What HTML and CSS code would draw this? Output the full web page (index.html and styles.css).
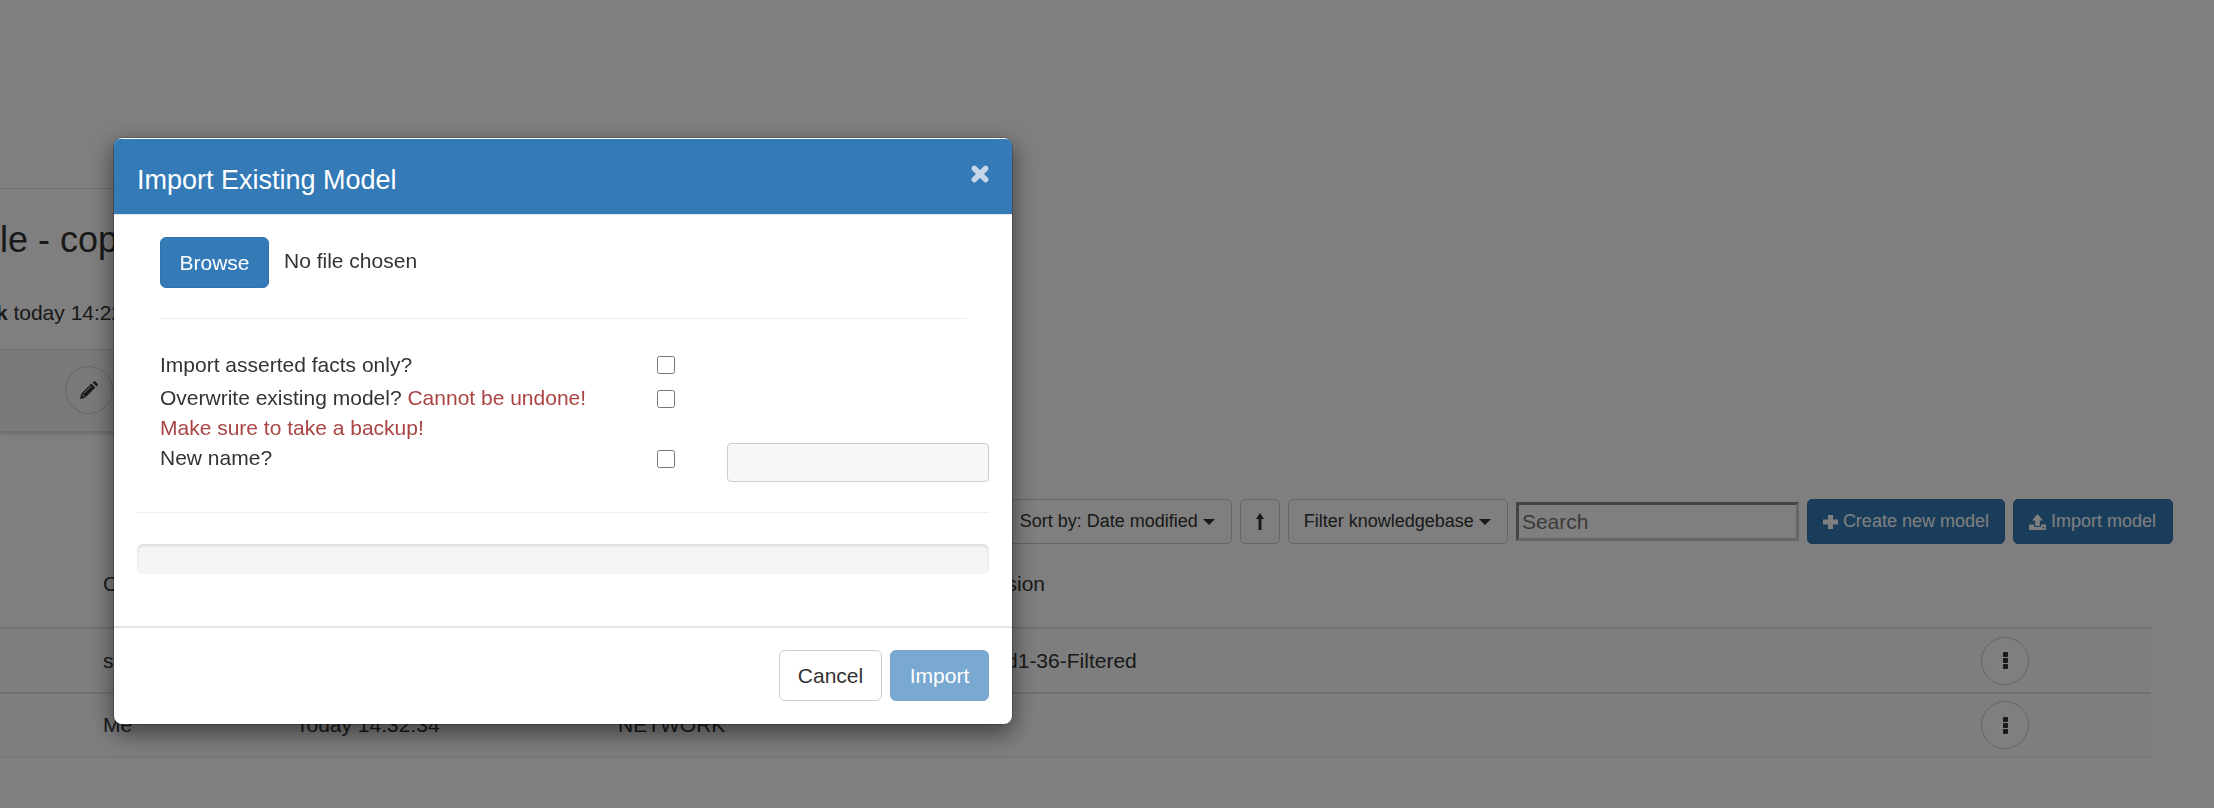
FILE: index.html
```html
<!DOCTYPE html>
<html>
<head>
    <title>Models</title>
    <link rel="stylesheet" href="styles.css">
</head>
<body>
    <div class="page">
        <section class="model-panel">
            <div class="panel-info">
                <h3 class="model-title">Example - copy</h3>
                <p class="model-meta">Edited by <b>Frank</b> today 14:22:10</p>
            </div>
            <div class="panel-actions">
                <span class="circle-btn">
                    <svg class="icon-pencil" viewBox="0 0 18 18"><path d="M0 18l1.2-5.2L11.4 2.6l4 4L5.2 16.8z M12.6 1.4l.7-.7c.7-.7 1.5-.7 2.2 0l1.8 1.8c.7.7.7 1.5 0 2.2l-.7.7z" fill="#333"/><path d="M2.2 13.4l2.4 2.4M3.8 12.4l7.4-7.4" stroke="#fff" stroke-width="0.9" fill="none"/></svg>
                </span>
            </div>
        </section>

        <div class="toolbar">
            <button class="btn btn-sm">Sort by: Date modified <i class="caret"></i></button>
            <button class="btn btn-sm btn-arrow">
                <svg class="icon-arrow" viewBox="0 0 8 17"><path d="M4 0L8 6H5.5V17H2.5V6H0z" fill="#333"/></svg>
            </button>
            <button class="btn btn-sm">Filter knowledgebase <i class="caret"></i></button>
            <input class="search" type="text" placeholder="Search">
            <button class="btn btn-sm btn-primary btn-create">
                <svg class="icon-plus" viewBox="0 0 15 14"><path d="M5 0h5v4.500h5v5h-5V14H5V9.500H0v-5h5z" fill="currentColor"/></svg>
                Create new model
            </button>
            <button class="btn btn-sm btn-primary">
                <svg class="icon-upload" viewBox="0 0 17 16"><path d="M8.500 0L14 6.500h-3.200V12H6.200V6.500H3z M0 10.500h5V13h7v-2.500h5V16H0z" fill="currentColor"/><path d="M13.500 13h2v1.400h-2z" fill="#337ab7"/></svg>
                Import model
            </button>
        </div>

        <table class="models">
            <thead>
                <tr>
                    <th class="col-owner">Owner</th>
                    <th class="col-date">Last modified</th>
                    <th class="col-kb">Knowledgebase</th>
                    <th class="col-version">Version</th>
                    <th class="col-more"></th>
                </tr>
            </thead>
            <tbody>
                <tr>
                    <td>system</td>
                    <td>Today 14:22:10</td>
                    <td>NETWORK</td>
                    <td>Build1-36-Filtered</td>
                    <td><span class="circle-btn"><i class="dots"></i></span></td>
                </tr>
                <tr>
                    <td>Me</td>
                    <td>Today 14:32:34</td>
                    <td>NETWORK</td>
                    <td></td>
                    <td><span class="circle-btn"><i class="dots"></i></span></td>
                </tr>
            </tbody>
        </table>
    </div>

    <div class="backdrop"></div>

    <div class="modal">
        <div class="modal-header">
            <h4 class="modal-title">Import Existing Model</h4>
            <svg class="icon-close" viewBox="0 0 18 18"><path d="M3.400 3.400l11.200 11.200M14.600 3.400L3.400 14.600" stroke="currentColor" stroke-width="5.600" stroke-linecap="round"/></svg>
        </div>
        <div class="modal-body">
            <div class="import-form">
                <div class="file-row">
                    <button class="btn btn-primary btn-browse">Browse</button>
                    <span>No file chosen</span>
                </div>
                <hr class="rule">
                <div class="options">
                    <label class="option-label">Import asserted facts only?</label>
                    <input class="check" type="checkbox">
                    <span></span>

                    <label class="option-label">Overwrite existing model? <span class="warn">Cannot be undone! Make sure to take a backup!</span></label>
                    <input class="check check-low" type="checkbox">
                    <span></span>

                    <label class="option-label">New name?</label>
                    <input class="check check-low" type="checkbox">
                    <input class="new-name" type="text" disabled>
                </div>
            </div>
            <hr class="rule rule-wide">
            <div class="progress"></div>
        </div>
        <div class="modal-footer">
            <button class="btn btn-cancel">Cancel</button>
            <button class="btn btn-primary btn-import">Import</button>
        </div>
    </div>
</body>
</html>
```

FILE: styles.css
```css
* {
    box-sizing: border-box;
}

html, body {
    margin: 0;
    height: 808px;
    overflow: hidden;
}

body {
    font-family: "Liberation Sans", Arial, sans-serif;
    font-size: 21px;
    line-height: 30px;
    color: #333;
    background: #fff;
}

.page {
    height: 808px;
    padding-top: 188px;
}

/* panel behind the dialog */
.model-panel {
    width: 400px;
    height: 244px;
    border-top: 1px solid #ddd;
    border-bottom: 1px solid #ddd;
    box-shadow: 0 2px 3px rgba(0, 0, 0, 0.15);
    overflow: hidden;
}

.panel-info {
    height: 161px;
    border-bottom: 1px solid #ddd;
    padding-top: 31px;
}

.model-title {
    margin: 0 0 38px -112px;
    font-size: 36px;
    line-height: 40px;
    font-weight: 400;
    white-space: nowrap;
}

.model-meta {
    margin: 0 0 0 -143px;
    white-space: nowrap;
}

.panel-actions {
    display: flex;
    padding: 16px 0 0 65px;
    background: #f5f5f5;
    height: 81px;
}

.circle-btn {
    display: flex;
    align-items: center;
    justify-content: center;
    width: 48px;
    height: 48px;
    border: 1px solid #ccc;
    border-radius: 50%;
    background: #fff;
}

.panel-actions .circle-btn {
    background: #f5f5f5;
}

.icon-pencil {
    width: 18px;
    height: 18px;
}

.toolbar {
    display: flex;
    justify-content: flex-end;
    align-items: center;
    gap: 8px;
    height: 45px;
    margin-top: 67px;
    padding-right: 41px;
}

.btn {
    font-family: inherit;
    font-size: 21px;
    line-height: 30px;
    color: #333;
    background: #fff;
    border: 1px solid #ccc;
    border-radius: 6px;
    padding: 9px 18px;
    height: 51px;
}

.btn-sm {
    display: flex;
    align-items: center;
    font-size: 18px;
    line-height: 27px;
    height: 45px;
    padding: 0 16px 0 15px;
    border-radius: 5px;
    white-space: nowrap;
}

.btn-primary {
    color: #fff;
    background: #337ab7;
    border-color: #3072ab;
}

.btn-sm.btn-primary {
    gap: 5px;
}

.btn-sm.btn-create {
    padding-right: 15px;
}

.btn-arrow {
    width: 40px;
    justify-content: center;
    padding: 0;
}

.icon-arrow {
    width: 8px;
    height: 17px;
}

.icon-plus {
    width: 15px;
    height: 14px;
}

.icon-upload {
    width: 17px;
    height: 16px;
}

.caret {
    display: inline-block;
    margin-left: 5px;
    border-top: 6px solid #333;
    border-left: 6px solid transparent;
    border-right: 6px solid transparent;
}

.search {
    width: 283px;
    height: 39px;
    font-family: inherit;
    font-size: 21px;
    padding: 0 3px;
    border-width: 3px;
    border-style: solid;
    border-color: #888 #ccc #ccc #888;
    background: #fff;
}

.models {
    width: 2151px;
    margin-top: 0;
    border-collapse: collapse;
    table-layout: fixed;
}

.models th {
    height: 84px;
    padding: 0 0 4px;
    font-weight: 400;
    text-align: left;
}

.models tbody {
    background: #fdfdfd;
}

.models td {
    height: 65px;
    padding: 0;
    border-top: 2px solid #e2e2e2;
}

.models tbody tr:last-child td {
    height: 64px;
    border-bottom: 2px solid #f3f3f3;
}

.col-owner {
    width: 296px;
    padding-left: 103px !important;
}

.col-date {
    width: 322px;
}

.col-kb {
    width: 353px;
}

.col-version {
    width: 1010px;
    padding-left: 4px !important;
}

.models td:first-child {
    padding-left: 103px;
}

.dots {
    width: 5px;
    height: 5px;
    border-radius: 1px;
    background: #333;
    box-shadow: 0 -6px 0 #333, 0 6px 0 #333;
}

/* dialog */
.backdrop {
    position: fixed;
    inset: 0;
    background: rgba(0, 0, 0, 0.5);
}

.modal {
    position: fixed;
    left: 113px;
    top: 137px;
    width: 900px;
    height: 588px;
    display: flex;
    flex-direction: column;
    background: #fff;
    border-radius: 9px;
    border: 1px solid rgba(0, 0, 0, 0.2);
    background-clip: padding-box;
    box-shadow: 0 8px 23px rgba(0, 0, 0, 0.5);
}

.modal-header {
    display: flex;
    justify-content: space-between;
    align-items: flex-start;
    flex: none;
    height: 76px;
    margin-top: 1px;
    padding: 26px 23px 0;
    color: #fff;
    background: #337ab7;
    border-radius: 6px 6px 0 0;
    border-bottom: 1px solid #e5e5e5;
}

.modal-title {
    margin: 0;
    font-size: 27px;
    line-height: 30px;
    font-weight: 400;
}

.icon-close {
    width: 18px;
    height: 18px;
    color: #c4d6e8;
}

.modal-body {
    flex: 1;
    padding: 22px 23px 0;
}

.import-form {
    padding: 0 22px 0 23px;
}

.file-row {
    display: flex;
    gap: 15px;
    height: 51px;
}

.file-row span {
    padding-top: 9px;
    line-height: 30px;
}

.btn-browse {
    width: 109px;
    padding: 9px 0;
}

.rule {
    height: 1px;
    margin: 30px 0 31px;
    border: 0;
    background: #eee;
}

.rule-wide {
    margin: 30px 0 31px;
}

.options {
    display: grid;
    grid-template-columns: 497px 70px 262px;
    grid-template-rows: 33px 60px 39px;
    margin-right: -22px;
}

.option-label {
    padding-right: 47px;
}

.check {
    width: 18px;
    height: 18px;
    margin: 6px 0 0;
}

.check-low {
    margin-top: 7px;
}

.warn {
    color: #a94442;
}

.new-name {
    height: 39px;
    border: 1px solid #ccc;
    border-radius: 4px;
    background: #f7f7f7;
}

.progress {
    height: 30px;
    background: #f5f5f5;
    border-radius: 6px;
    box-shadow: inset 0 2px 3px rgba(0, 0, 0, 0.1);
}

.modal-footer {
    display: flex;
    flex: none;
    justify-content: flex-end;
    gap: 8px;
    height: 98px;
    padding: 22px 23px 0;
    border-top: 2px solid #e5e5e5;
}

.btn-cancel {
    width: 103px;
    padding: 9px 0;
}

.btn-import {
    width: 99px;
    padding: 9px 0;
    opacity: 0.65;
}
```
